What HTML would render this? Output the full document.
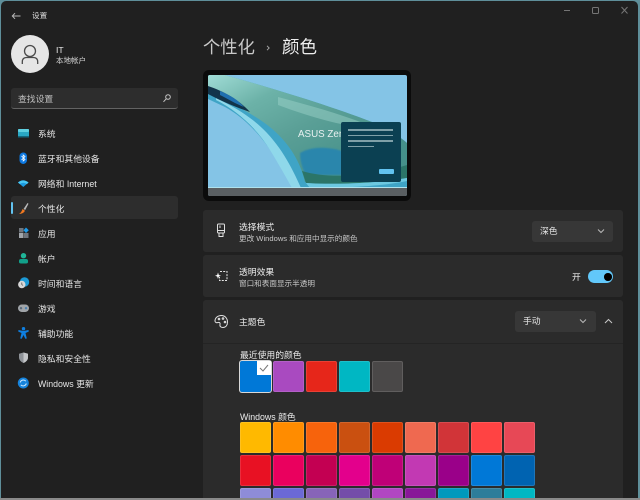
<!DOCTYPE html>
<html><head><meta charset="utf-8"><style>
*{box-sizing:border-box;margin:0;padding:0}
html,body{width:640px;height:500px;overflow:hidden;background:#5f8f9a}
body{position:relative;font-family:"Liberation Sans","Noto Sans CJK SC",sans-serif;color:#e6e6e6}
#r{position:absolute;left:0;top:0;width:640px;height:500px;filter:blur(.3px)}
.a{position:absolute;white-space:nowrap}
#w{position:absolute;left:1px;top:1px;width:637px;height:497px;background:#202020;border-radius:5px 5px 0 0;overflow:hidden}
.n{position:absolute;left:38px;font-size:8.8px;line-height:14px;color:#e6e6e6;white-space:nowrap}
.ic{position:absolute;left:15px;width:16px;height:16px}
.card{position:absolute;left:203px;width:420px;background:#2b2b2b;border-radius:3px}
.dd{position:absolute;background:#373737;border-radius:3px;height:21px;width:81px;font-size:8.8px;line-height:21px;padding-left:8px;color:#e6e6e6}
.s{position:absolute;width:31px;height:31px;border-radius:2px;box-shadow:inset 0 0 0 1px rgba(255,255,255,.12)}
.t1{font-size:8.8px;line-height:13px;color:#ececec}
.t2{font-size:7.6px;line-height:11px;color:#c8c8c8}
</style></head><body><div id="r">
<div id="w"></div>

<svg class="a" style="left:11px;top:10px" width="11" height="12" viewBox="0 0 11 12" fill="none" stroke="#b8b8b8" stroke-width="1"><path d="M1.500 6H9.500M4 3.200 1.300 6 4 8.800"/></svg>
<div class="a" style="left:32px;top:10px;font-size:7.6px;line-height:12px;color:#d8d8d8">设置</div>

<div class="a" style="left:11px;top:35px;width:38px;height:38px;border-radius:50%;background:#e6e6e6"></div>
<svg class="a" style="left:19px;top:42px" width="22" height="24" viewBox="0 0 22 24" fill="none" stroke="#4a4a4a" stroke-width="1.300"><circle cx="11" cy="9" r="5.500"/><path d="M3.300 22V20C3.300 17 5 15.500 7.500 15.500H14.500C17 15.500 18.700 17 18.700 20V22"/></svg>
<div class="a" style="left:56px;top:44px;font-size:8.600px;line-height:12px;color:#ececec">IT</div>
<div class="a" style="left:56px;top:55px;font-size:7.500px;line-height:12px;color:#d8d8d8">本地帐户</div>

<div class="a" style="left:11px;top:88px;width:167px;height:21px;background:#2d2d2d;border-radius:3px;border-bottom:1px solid #636363"></div>
<div class="a" style="left:18px;top:92px;font-size:8.800px;line-height:14px;color:#c0c0c0">查找设置</div>
<svg class="a" style="left:161px;top:92px" width="12" height="12" viewBox="0 0 12 12" fill="none" stroke="#c4c4c4" stroke-width="1"><circle cx="7" cy="5" r="2.300"/><path d="M5.200 6.800 2.500 9.800"/></svg>

<div class="a" style="left:11px;top:196px;width:167px;height:23px;background:#2d2d2d;border-radius:3px"></div>
<div class="a" style="left:11px;top:202px;width:2px;height:12px;background:#62c3f0;border-radius:1px"></div>

<svg class="ic" style="top:125px" viewBox="0 0 16 16"><rect x="3" y="4" width="11" height="8" rx="1" fill="#2aa8c4"/><rect x="3" y="4" width="11" height="3" rx="1" fill="#5fd0e0"/><rect x="3" y="11" width="11" height="1.500" fill="#14687e"/></svg>
<div class="n" style="top:127px">系统</div>
<svg class="ic" style="top:150px" viewBox="0 0 16 16"><rect x="4.500" y="2.500" width="7.500" height="11.500" rx="3.700" fill="#0d78e0"/><path d="M6.500 6 10 9.500 8.200 11V5L10 6.500 6.500 10" fill="none" stroke="#fff" stroke-width=".8"/></svg>
<div class="n" style="top:152px">蓝牙和其他设备</div>
<svg class="ic" style="top:175px" viewBox="0 0 16 16"><path d="M3 7.500Q8 3 13.500 7.500L8.300 12Z" fill="#1c9ae0"/><path d="M3 7.500Q8 3.500 13.500 7.500L12 9Q8 6.500 4.800 9Z" fill="#49c8f5"/></svg>
<div class="n" style="top:177px">网络和 Internet</div>
<svg class="ic" style="top:200px" viewBox="0 0 16 16"><path d="M8.500 9 12.500 3 13.500 3.800 10.200 10Z" fill="#b8b8b8"/><path d="M7.500 9 10 10.800 Q8.500 14 4 14 Q6.500 12.500 7.500 9Z" fill="#f07820"/></svg>
<div class="n" style="top:202px">个性化</div>
<svg class="ic" style="top:225px" viewBox="0 0 16 16"><rect x="4" y="3" width="4.500" height="4.500" fill="#70757c"/><rect x="4" y="8" width="4.500" height="5" fill="#a0a5aa"/><rect x="9" y="8" width="4.500" height="5" fill="#70757c"/><path d="M11 2.500 13.800 5.300 11 8 8.500 5.300Z" fill="#1c9ae8"/></svg>
<div class="n" style="top:227px">应用</div>
<svg class="ic" style="top:250px" viewBox="0 0 16 16"><circle cx="8.500" cy="5.700" r="2.700" fill="#1fb598"/><path d="M4 12V11Q4 9 6 9H11Q13 9 13 11V12Q13 13.500 11 13.500H6Q4 13.500 4 12Z" fill="#12a08a"/></svg>
<div class="n" style="top:252px">帐户</div>
<svg class="ic" style="top:275px" viewBox="0 0 16 16"><circle cx="9.500" cy="7" r="4.700" fill="#1c9ad6"/><circle cx="6.800" cy="9.500" r="3.700" fill="#d8d8d8"/><path d="M6.800 7.500V9.500L8 10.500" stroke="#555" fill="none" stroke-width=".8"/></svg>
<div class="n" style="top:277px">时间和语言</div>
<svg class="ic" style="top:300px" viewBox="0 0 16 16"><rect x="3" y="4.500" width="11" height="7.500" rx="3.700" fill="#a0a4a8"/><circle cx="6" cy="8.200" r="1.200" fill="#5a6a7a"/><circle cx="11" cy="8.200" r="1.200" fill="#4a80b0"/></svg>
<div class="n" style="top:302px">游戏</div>
<svg class="ic" style="top:325px" viewBox="0 0 16 16"><circle cx="8.500" cy="3.700" r="1.700" fill="#0f7fe0"/><path d="M3.500 5 8.500 6 13.500 5 13.800 6.500 10.500 8 11.800 13.500 10.300 13.800 8.500 10 6.700 13.800 5.200 13.500 6.500 8 3.200 6.500Z" fill="#0f7fe0"/></svg>
<div class="n" style="top:327px">辅助功能</div>
<svg class="ic" style="top:350px" viewBox="0 0 16 16"><path d="M8.500 2.500 13 3.700V7.500Q13 11 8.500 13 4 11 4 7.500V3.700Z" fill="#8f9398"/><path d="M8.500 2.500 13 3.700V7.500Q13 11 8.500 13Z" fill="#c4c6c8"/></svg>
<div class="n" style="top:352px">隐私和安全性</div>
<svg class="ic" style="top:375px" viewBox="0 0 16 16"><circle cx="8.300" cy="8" r="5.500" fill="#1583dc"/><path d="M5.200 7.500A3.200 3.200 0 0 1 10.800 6.200M11.300 8.500A3.200 3.200 0 0 1 5.800 9.800" fill="none" stroke="#cfeaff" stroke-width="1"/></svg>
<div class="n" style="top:377px">Windows 更新</div>

<div class="a" style="left:203px;top:35px;font-size:17.300px;line-height:24px;color:#c9c9c9">个性化</div>
<svg class="a" style="left:264px;top:43px" width="8" height="10" viewBox="0 0 8 10" fill="none" stroke="#aaaaaa" stroke-width=".9"><path d="M3 2.800 5.200 5 3 7.200"/></svg>
<div class="a" style="left:282px;top:35px;font-size:17.500px;line-height:24px;color:#eeeeee">颜色</div>

<div class="a" style="left:203px;top:70px;width:208px;height:131px;background:#0b0b0b;border-radius:6px"></div>
<div class="a" style="left:208px;top:75px;width:199px;height:121px;background:#84c4e6;border-radius:2px;overflow:hidden">
<svg width="199" height="121" viewBox="0 0 199 121" style="position:absolute;left:0;top:0">
<defs><linearGradient id="g" x1="0" y1="0" x2=".8" y2=".8"><stop offset="0" stop-color="#a0dcd6"/><stop offset=".3" stop-color="#6cb2a8"/><stop offset=".6" stop-color="#5a9f96"/><stop offset="1" stop-color="#45908a"/></linearGradient><filter id="b"><feGaussianBlur stdDeviation=".8"/></filter></defs>
<path d="M0 0H17C60 12 120 30 164 47 180 55 190 60 199 68V113H85C70 85 50 50 17 32L0 24Z" fill="#3fa4c6"/>
<path d="M8 25C30 36 50 55 62 75 70 88 78 102 84 113H93C82 88 68 62 42 43 30 34 18 28 8 23Z" fill="#8fd8ea"/>
<path d="M0 0H17C60 12 120 30 164 47 180 55 190 60 199 68V102L97 107C92 85 78 60 46 41 30 31 10 22 0 17Z" fill="url(#g)"/>
<path d="M70 22C100 30 130 38 160 50 150 55 110 45 70 30Z" fill="#a0d4cc" opacity=".45"/>
<path d="M0 11C15 16 30 24 42 37 30 33 15 27 0 19Z" fill="#12344a"/>
<path d="M12 16C22 20 30 25 36 32 28 29 20 24 12 20Z" fill="#1f70b0"/>
<path d="M92 78C105 70 125 72 140 78V100H98Q92 90 92 78Z" fill="#2a86ac" filter="url(#b)"/>
<path d="M94 96C120 104 160 102 199 90V103C170 108 130 110 98 108Z" fill="#2b7568"/>
<path d="M98 108C130 110 170 108 199 103V106C170 112 130 113 102 113Z" fill="#6cc8e0"/>
<rect x="0" y="113" width="199" height="8" fill="#5a5f62"/>
<rect x="0" y="112" width="199" height="1" fill="#aee2ee"/>
</svg>
<div class="a" style="left:90px;top:53px;font-size:9.800px;line-height:14px;color:#e8f0f0">ASUS Zen</div>
<div class="a" style="left:133px;top:47px;width:60px;height:60px;background:#0b4052;border-radius:2px"></div>
<div class="a" style="left:140px;top:54px;width:45px;height:1.500px;background:#7fa0a8"></div>
<div class="a" style="left:140px;top:59.500px;width:45px;height:1.500px;background:#7fa0a8"></div>
<div class="a" style="left:140px;top:65px;width:45px;height:1.500px;background:#7fa0a8"></div>
<div class="a" style="left:140px;top:70.500px;width:26px;height:1.500px;background:#7fa0a8"></div>
<div class="a" style="left:171px;top:94px;width:15px;height:5px;background:#62c3f0;border-radius:1px"></div>
</div>

<div class="card" style="top:210px;height:42px"></div>
<svg class="a" style="left:214px;top:222px" width="14" height="18" viewBox="0 0 14 18" fill="none" stroke="#e0e0e0" stroke-width="1"><rect x="3.500" y="2" width="7" height="9" rx="1"/><path d="M3.500 8.500H10.500M5 11V14.500H9V11M6 3.500V6"/></svg>
<div class="a t1" style="left:239px;top:221px">选择模式</div>
<div class="a t2" style="left:239px;top:233px">更改 Windows 和应用中显示的颜色</div>
<div class="dd" style="left:532px;top:221px">深色</div>
<svg class="a" style="left:597px;top:228px" width="8" height="6" viewBox="0 0 8 6" fill="none" stroke="#b8b8b8" stroke-width="1"><path d="M1 1.500 4 4.500 7 1.500"/></svg>

<div class="card" style="top:255px;height:42px"></div>
<svg class="a" style="left:214px;top:269px" width="15" height="14" viewBox="0 0 15 14" fill="none" stroke="#e6e6e6" stroke-width="1"><path d="M6 2.500H13V11.500H5.500V8" stroke-dasharray="2 1.200"/><path d="M4 3.500 4.800 6 7 6.800 4.800 7.500 4 10 3.200 7.500 1 6.800 3.200 6Z" fill="#fff" stroke="none"/></svg>
<div class="a t1" style="left:239px;top:266px">透明效果</div>
<div class="a t2" style="left:239px;top:278px">窗口和表面显示半透明</div>
<div class="a" style="left:572px;top:270px;font-size:8.800px;line-height:14px;color:#ececec">开</div>
<div class="a" style="left:588px;top:270px;width:25px;height:13px;border-radius:7px;background:#62c8fa"></div>
<div class="a" style="left:604px;top:273px;width:7.500px;height:7.500px;border-radius:50%;background:#000"></div>

<div class="card" style="top:300px;height:198px;border-radius:3px 3px 0 0"></div>
<svg class="a" style="left:214px;top:314px" width="15" height="15" viewBox="0 0 15 15" fill="none" stroke="#e0e0e0" stroke-width="1"><path d="M7.500 1.500C3.500 1.500 1 4 1 7 1 8.500 2.500 9 4 8.500 5.500 8 6.500 9 6 10.500 5.500 12.500 7 13.500 9 13.500 12 13.500 13.500 11 13.500 8 13.500 4.500 11 1.500 7.500 1.500Z"/><circle cx="5" cy="5" r=".8"/><circle cx="9" cy="4.500" r=".8"/><circle cx="11" cy="8" r=".8"/></svg>
<div class="a t1" style="left:239px;top:316px">主题色</div>
<div class="dd" style="left:515px;top:311px">手动</div>
<svg class="a" style="left:579px;top:318px" width="8" height="6" viewBox="0 0 8 6" fill="none" stroke="#b8b8b8" stroke-width="1"><path d="M1 1.500 4 4.500 7 1.500"/></svg>
<svg class="a" style="left:604px;top:318px" width="9" height="6" viewBox="0 0 9 6" fill="none" stroke="#c8c8c8" stroke-width="1"><path d="M1 5 4.500 1.500 8 5"/></svg>
<div class="a" style="left:203px;top:343px;width:420px;height:1px;background:#242424"></div>

<div class="a t1" style="left:240px;top:349px">最近使用的颜色</div>
<div class="s" style="left:240px;top:361px;background:#0078d7;box-shadow:0 0 0 1px #d8d8d8"></div>
<div class="a" style="left:257px;top:361px;width:14px;height:14px;background:#fff"></div>
<svg class="a" style="left:258px;top:363px" width="12" height="10" viewBox="0 0 12 10" fill="none" stroke="#777" stroke-width="1"><path d="M2 5 5 8 10 2"/></svg>
<div class="s" style="left:273px;top:361px;background:#a94ac0"></div>
<div class="s" style="left:306px;top:361px;background:#e6261a"></div>
<div class="s" style="left:339px;top:361px;background:#00b7c3"></div>
<div class="s" style="left:372px;top:361px;background:#4a4848"></div>

<div class="a t1" style="left:240px;top:411px">Windows 颜色</div>
<div class="s" style="left:240px;top:422px;background:#ffb900"></div>
<div class="s" style="left:273px;top:422px;background:#ff8c00"></div>
<div class="s" style="left:306px;top:422px;background:#f7630c"></div>
<div class="s" style="left:339px;top:422px;background:#ca5010"></div>
<div class="s" style="left:372px;top:422px;background:#da3b01"></div>
<div class="s" style="left:405px;top:422px;background:#ef6950"></div>
<div class="s" style="left:438px;top:422px;background:#d13438"></div>
<div class="s" style="left:471px;top:422px;background:#ff4343"></div>
<div class="s" style="left:504px;top:422px;background:#e74856"></div>

<div class="s" style="left:240px;top:455px;background:#e81123"></div>
<div class="s" style="left:273px;top:455px;background:#ea005e"></div>
<div class="s" style="left:306px;top:455px;background:#c30052"></div>
<div class="s" style="left:339px;top:455px;background:#e3008c"></div>
<div class="s" style="left:372px;top:455px;background:#bf0077"></div>
<div class="s" style="left:405px;top:455px;background:#c239b3"></div>
<div class="s" style="left:438px;top:455px;background:#9a0089"></div>
<div class="s" style="left:471px;top:455px;background:#0078d7"></div>
<div class="s" style="left:504px;top:455px;background:#0063b1"></div>

<div class="s" style="left:240px;top:488px;background:#8e8cd8"></div>
<div class="s" style="left:273px;top:488px;background:#6b69d6"></div>
<div class="s" style="left:306px;top:488px;background:#8764b8"></div>
<div class="s" style="left:339px;top:488px;background:#744da9"></div>
<div class="s" style="left:372px;top:488px;background:#b146c2"></div>
<div class="s" style="left:405px;top:488px;background:#881798"></div>
<div class="s" style="left:438px;top:488px;background:#0099bc"></div>
<div class="s" style="left:471px;top:488px;background:#2d7d9a"></div>
<div class="s" style="left:504px;top:488px;background:#00b7c3"></div>

<div class="a" style="left:0;top:498px;width:640px;height:2px;background:#8a8a8a"></div>

<svg class="a" style="left:561px;top:5px" width="70" height="12" viewBox="0 0 70 12" fill="none" stroke="#757575" stroke-width="1"><path d="M3 5.500H9"/><rect x="31.500" y="2.500" width="6" height="6" rx="1"/><path d="M60.500 2 66.500 8.500M66.500 2 60.500 8.500"/></svg>
</div></body></html>
